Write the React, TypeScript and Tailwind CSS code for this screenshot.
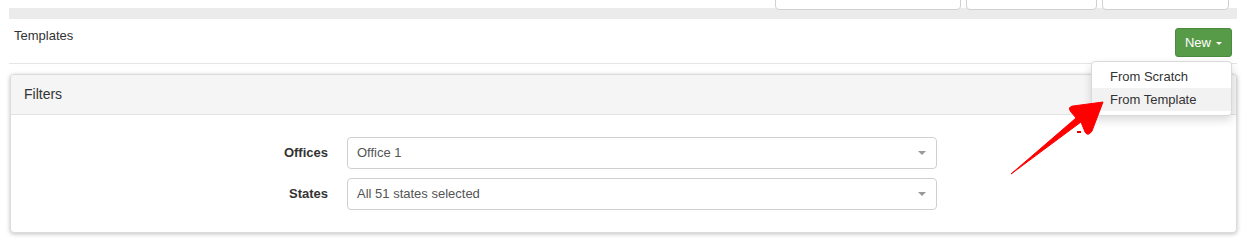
const Caret = ({ className = "" }: { className?: string }) => (
  <span
    className={`inline-block w-0 h-0 border-l-[4px] border-r-[4px] border-t-[4px] border-l-transparent border-r-transparent ${className}`}
  />
);

const SelectBox = ({ value }: { value: string }) => (
  <div className="w-[590px] h-[32px] border border-[#cfcfcf] rounded-[4px] bg-white flex items-center justify-between pl-[9px] pr-[10px] text-[13px] text-[#555]">
    <span>{value}</span>
    <Caret className="border-t-[#999]" />
  </div>
);

const App = () => {
  return (
    <div className="relative w-[1250px] h-[240px] bg-white overflow-hidden font-['Liberation_Sans',Arial,sans-serif] text-[#333]">
      {/* top strip, cut off */}
      <div className="relative h-[19px] mx-[9px] w-[1228px]">
        <div className="absolute left-0 right-0 top-[8px] bottom-0 bg-[#ebebeb]" />
        <div className="absolute top-[-4px] left-[766px] w-[186px] h-[14px] bg-white border border-[#d0d0d0] rounded-b-[4px]" />
        <div className="absolute top-[-4px] left-[957px] w-[131px] h-[14px] bg-white border border-[#d0d0d0] rounded-b-[4px]" />
        <div className="absolute top-[-4px] left-[1093px] w-[127px] h-[14px] bg-white border border-[#d0d0d0] rounded-b-[4px]" />
      </div>

      {/* title row */}
      <div className="mx-[9px] w-[1228px] h-[45px] border-b border-[#e6e6e6] flex items-start justify-between">
        <div className="pl-[5px] pt-[7px] text-[13px] text-[#333]">Templates</div>
        <div className="relative mr-[5px] mt-[9px]">
          <button className="h-[29px] w-[57px] rounded-[3px] bg-[#579b49] border border-[#4c8a40] text-white text-[13px] flex items-center justify-center gap-[5px]">
            New
            <span className="inline-block w-0 h-0 border-l-[3px] border-r-[3px] border-t-[3px] border-l-transparent border-r-transparent border-t-white mt-[1px]" />
          </button>
          <div className="absolute right-0 top-[33px] z-20 w-[141px] bg-white border border-[#d9d9d9] rounded-[4px] shadow-[0_4px_10px_rgba(0,0,0,0.15)] py-[4px] text-[13px] text-[#333]">
            <div className="h-[22px] pl-[18px] flex items-center">From Scratch</div>
            <div className="h-[23px] pl-[18px] flex items-center bg-[#f2f2f2]">From Template</div>
          </div>
        </div>
      </div>

      {/* filters panel */}
      <div className="ml-[10px] mt-[10px] w-[1227px] h-[159px] rounded-[4px] border border-[#dcdcdc] bg-white shadow-[0_1px_4px_rgba(0,0,0,0.25)] overflow-hidden">
        <div className="h-[40px] bg-[#f5f5f5] border-b border-[#e3e3e3] flex items-center pl-[13px] text-[14px] text-[#333]">
          Filters
        </div>
        <div className="pt-[22px] flex flex-col gap-[9px]">
          <div className="flex items-center">
            <div className="w-[317px] text-right text-[13px] font-bold text-[#333]">Offices</div>
            <div className="ml-[19px]">
              <SelectBox value="Office 1" />
            </div>
          </div>
          <div className="flex items-center">
            <div className="w-[317px] text-right text-[13px] font-bold text-[#333]">States</div>
            <div className="ml-[19px]">
              <SelectBox value="All 51 states selected" />
            </div>
          </div>
        </div>
      </div>

      {/* red annotation arrow */}
      <svg className="absolute inset-0 z-30 pointer-events-none" width="1250" height="240" viewBox="0 0 1250 240">
        <path
          d="M1011,174 L1076,118 L1071,112 Q1067,107 1073,106 L1103,102 L1092,131 Q1088,137 1085,132 L1081,122 Z"
          fill="#ff0000"
          stroke="#ff0000"
          strokeWidth="1"
          strokeLinejoin="round"
        />
        <rect x="1077" y="131" width="4" height="2" fill="#e00000" />
      </svg>
    </div>
  );
};

export default App;
